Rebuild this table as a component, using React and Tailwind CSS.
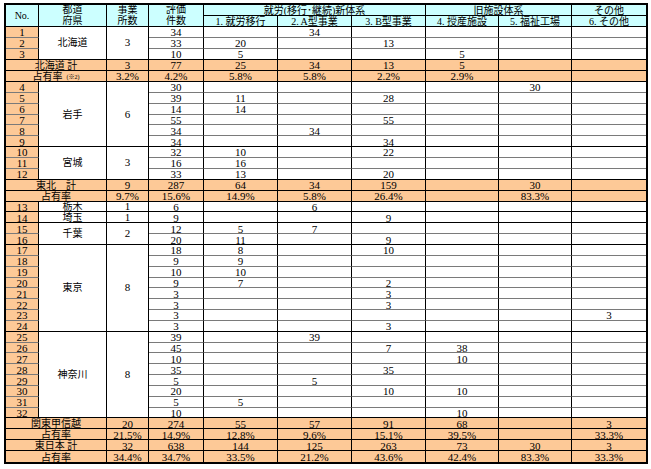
import React from 'react'

// column widths (inner, px) — total 640
const widths = [33, 68, 42, 55, 74, 74, 74, 73, 73, 74]

const subHeads = ['1. 就労移行', '2. A型事業', '3. B型事業', '4. 授産施設', '5. 福祉工場', '6. その他']

// row: [no, 評価件数, c1..c6]
const sections = [
    {
        groups: [
            {
                pref: '北海道', offices: '3', rows: [
                    [1, '34', '', '34', '', '', '', ''],
                    [2, '33', '20', '', '13', '', '', ''],
                    [3, '10', '5', '', '', '5', '', ''],
                ]
            },
        ],
        totals: [
            { label: '北海道 計', vals: ['3', '77', '25', '34', '13', '5', '', ''] },
            { label: '占有率', note: '(※2)', vals: ['3.2%', '4.2%', '5.8%', '5.8%', '2.2%', '2.9%', '', ''] },
        ],
    },
    {
        groups: [
            {
                pref: '岩手', offices: '6', rows: [
                    [4, '30', '', '', '', '', '30', ''],
                    [5, '39', '11', '', '28', '', '', ''],
                    [6, '14', '14', '', '', '', '', ''],
                    [7, '55', '', '', '55', '', '', ''],
                    [8, '34', '', '34', '', '', '', ''],
                    [9, '34', '', '', '34', '', '', ''],
                ]
            },
            {
                pref: '宮城', offices: '3', rows: [
                    [10, '32', '10', '', '22', '', '', ''],
                    [11, '16', '16', '', '', '', '', ''],
                    [12, '33', '13', '', '20', '', '', ''],
                ]
            },
        ],
        totals: [
            { label: '東北　計', vals: ['9', '287', '64', '34', '159', '', '30', ''] },
            { label: '占有率', vals: ['9.7%', '15.6%', '14.9%', '5.8%', '26.4%', '', '83.3%', ''] },
        ],
    },
    {
        groups: [
            { pref: '栃木', offices: '1', rows: [[13, '6', '', '6', '', '', '', '']] },
            { pref: '埼玉', offices: '1', rows: [[14, '9', '', '', '9', '', '', '']] },
            {
                pref: '千葉', offices: '2', rows: [
                    [15, '12', '5', '7', '', '', '', ''],
                    [16, '20', '11', '', '9', '', '', ''],
                ]
            },
            {
                pref: '東京', offices: '8', rows: [
                    [17, '18', '8', '', '10', '', '', ''],
                    [18, '9', '9', '', '', '', '', ''],
                    [19, '10', '10', '', '', '', '', ''],
                    [20, '9', '7', '', '2', '', '', ''],
                    [21, '3', '', '', '3', '', '', ''],
                    [22, '3', '', '', '3', '', '', ''],
                    [23, '3', '', '', '', '', '', '3'],
                    [24, '3', '', '', '3', '', '', ''],
                ]
            },
            {
                pref: '神奈川', offices: '8', rows: [
                    [25, '39', '', '39', '', '', '', ''],
                    [26, '45', '', '', '7', '38', '', ''],
                    [27, '10', '', '', '', '10', '', ''],
                    [28, '35', '', '', '35', '', '', ''],
                    [29, '5', '', '5', '', '', '', ''],
                    [30, '20', '', '', '10', '10', '', ''],
                    [31, '5', '5', '', '', '', '', ''],
                    [32, '10', '', '', '', '10', '', ''],
                ]
            },
        ],
        totals: [
            { label: '関東甲信越', vals: ['20', '274', '55', '57', '91', '68', '', '3'] },
            { label: '占有率', vals: ['21.5%', '14.9%', '12.8%', '9.6%', '15.1%', '39.5%', '', '33.3%'] },
            { label: '東日本 計', vals: ['32', '638', '144', '125', '263', '73', '30', '3'] },
            { label: '占有率', vals: ['34.4%', '34.7%', '33.5%', '21.2%', '43.6%', '42.4%', '83.3%', '33.3%'] },
        ],
    },
]

const jp = 'text-[10px]'
const cell = 'pt-[1px] leading-[8px]'

export default function App() {
    const body = []
    let key = 0

    sections.forEach((sec, si) => {
        sec.groups.forEach((g) => {
            g.rows.forEach((r, i) => {
                const last = i === g.rows.length - 1
                const bb = last ? 'border-b border-b-black' : 'border-b border-b-[#7a7a7a]'
                body.push(
                    <tr key={key++} className="h-[10.85px]">
                        <td className={`${cell} bg-[#fdc997] border-r border-r-black ${bb}`}>{r[0]}</td>
                        {i === 0 && (
                            <>
                                <td rowSpan={g.rows.length} className="bg-white border-r border-b border-black">
                                    <span className={jp}>{g.pref}</span>
                                </td>
                                <td rowSpan={g.rows.length} className="bg-white border-r border-b border-black">{g.offices}</td>
                            </>
                        )}
                        {r.slice(1).map((v, ci) => (
                            <td key={ci} className={`${cell} bg-white ${ci < 6 ? 'border-r border-r-black' : ''} ${bb}`}>{v}</td>
                        ))}
                    </tr>
                )
            })
        })
        sec.totals.forEach((t, ti) => {
            const lastRow = si === sections.length - 1 && ti === sec.totals.length - 1
            const bb = lastRow ? '' : 'border-b border-b-black'
            body.push(
                <tr key={key++} className="h-[10.85px] bg-[#fdc997]">
                    <td colSpan={2} className={`${cell} border-r border-r-black ${bb}`}>
                        <span className={jp}>{t.label}</span>
                        {t.note && <span className="text-[6px] ml-[4px] align-middle">{t.note}</span>}
                    </td>
                    {t.vals.map((v, ci) => (
                        <td key={ci} className={`${cell} ${ci < 7 ? 'border-r border-r-black' : ''} ${bb}`}>{v}</td>
                    ))}
                </tr>
            )
        })
    })

    return (
        <div className="w-[651px] h-[469px] bg-white pt-[3px] pl-[4px] overflow-hidden">
            <table
                className="table-fixed border-separate border-spacing-0 border-2 border-black w-[644px] text-center text-[11px] leading-[9px] text-black"
                style={{ fontFamily: '"Liberation Serif", "Noto Sans CJK JP", serif' }}
            >
                <colgroup>
                    {widths.map((w, i) => (
                        <col key={i} style={{ width: w }} />
                    ))}
                </colgroup>
                <thead>
                    <tr className="h-[10.5px] bg-[#ccffff]">
                        <th rowSpan={2} className="font-normal border-r border-b border-black text-[10px]">No.</th>
                        <th rowSpan={2} className={`font-normal border-r border-b border-black ${jp} leading-[10.5px]`}>都道<br />府県</th>
                        <th rowSpan={2} className={`font-normal border-r border-b border-black ${jp} leading-[10.5px]`}>事業<br />所数</th>
                        <th rowSpan={2} className={`font-normal border-r border-b border-black ${jp} leading-[10.5px]`}>評価<br />件数</th>
                        <th colSpan={3} className={`font-normal border-r border-b border-black ${jp}`}>就労(移行･継続)新体系</th>
                        <th colSpan={2} className={`font-normal border-r border-b border-black ${jp}`}>旧施設体系</th>
                        <th className={`font-normal border-b border-black ${jp}`}>その他</th>
                    </tr>
                    <tr className="h-[10.5px] bg-[#ccffff]">
                        {subHeads.map((h, i) => (
                            <th key={i} className={`font-normal border-b border-black ${i < 5 ? 'border-r' : ''} ${jp}`}>{h}</th>
                        ))}
                    </tr>
                </thead>
                <tbody>{body}</tbody>
            </table>
        </div>
    )
}
